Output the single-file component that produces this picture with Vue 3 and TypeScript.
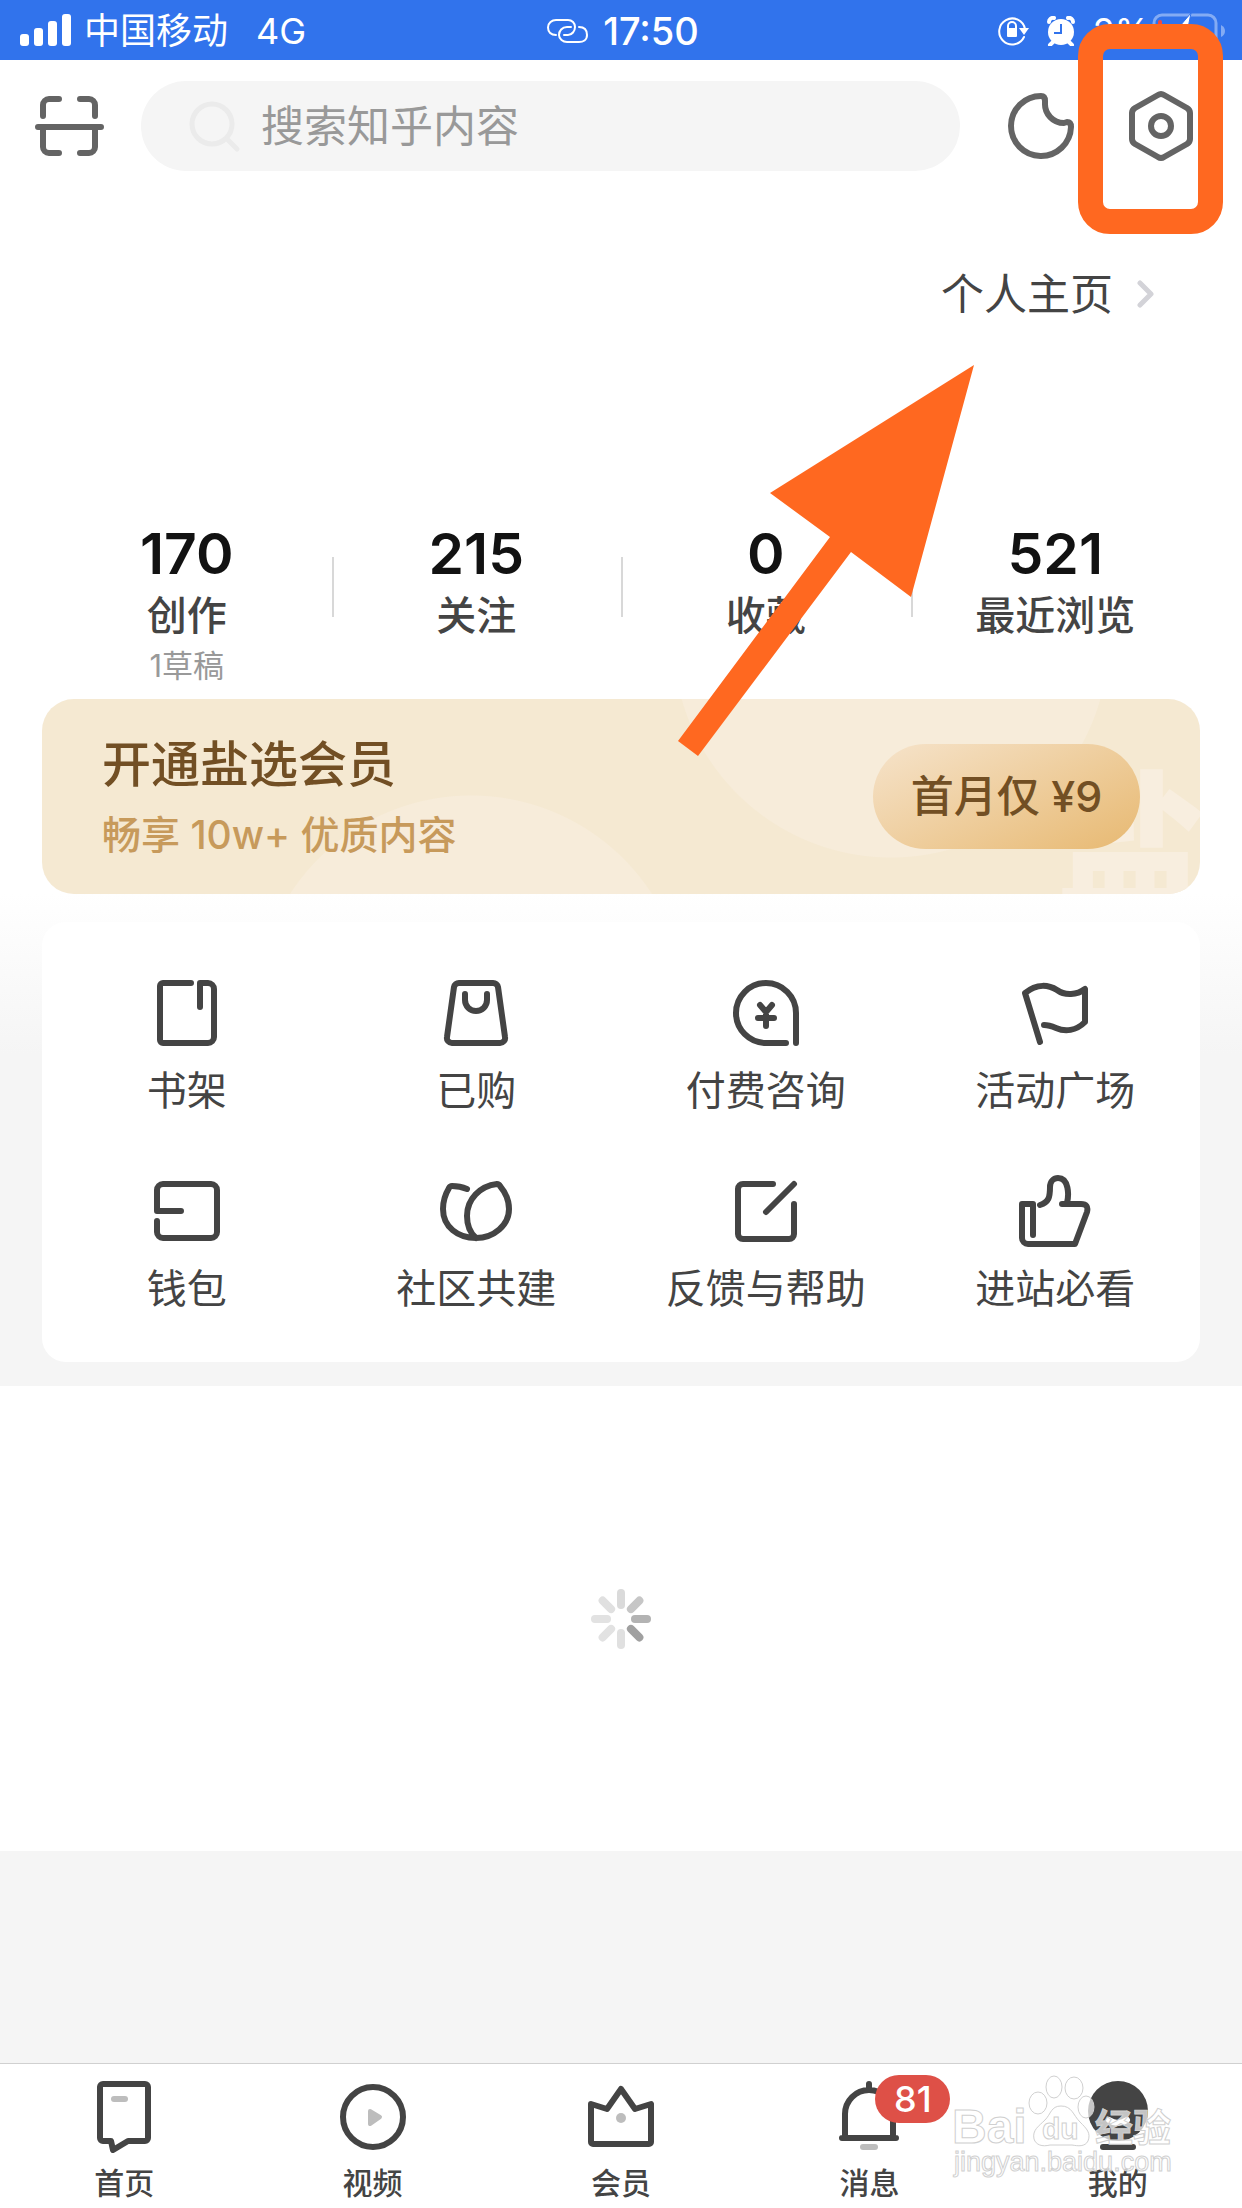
<script setup lang="ts">
import { ref } from 'vue'

interface Stat {
  value: number
  label: string
  note?: string
}

interface Service {
  label: string
  path: string
}

const keyword = ref('')

const stats: Stat[] = [
  { value: 170, label: '创作', note: '1草稿' },
  { value: 215, label: '关注' },
  { value: 0, label: '收藏' },
  { value: 521, label: '最近浏览' },
]

const services: Service[] = [
  { label: '书架', path: 'M49 30V6h8a6 6 0 0 1 6 6v48a6 6 0 0 1-6 6H12a3 3 0 0 1-3-3V9a3 3 0 0 1 3-3h28' },
  { label: '已购', path: 'M19 6h34a5 5 0 0 1 5 4l7 50a5 5 0 0 1-5 6H12a5 5 0 0 1-5-6l7-50a5 5 0 0 1 5-4zM25 17v6a11 11 0 0 0 22 0v-6' },
  { label: '付费咨询', path: 'M66 66V36a30 30 0 1 0-30 30h20M30 28l6 7 6-7M36 35v14M28 41h16' },
  { label: '活动广场', path: 'M21 65L6 16C18 6 30 8 38 13C46 19 58 18 66 12V45C57 54 46 55 37 51Q30 48 25 48' },
  { label: '钱包', path: 'M30 36H6V15a6 6 0 0 1 6-6h48a6 6 0 0 1 6 6v42a6 6 0 0 1-6 6H12a6 6 0 0 1-6-6V46' },
  { label: '社区共建', path: 'M36 63C29 57 27 49 27 41C27 24 40 11 57 9q2 0 3 2C66 18 69 26 69 34C69 50 54 63 36 63C18 63 3 52 3 34C3 25 6 18 9 13q1-2 3-2Q20 11 27 14' },
  { label: '反馈与帮助', path: 'M43 9H13a5 5 0 0 0-5 5v45a5 5 0 0 0 5 5h46a5 5 0 0 0 5-5V29M64 9L36 37' },
  { label: '进站必看', path: 'M14 60V29H3v34a6 6 0 0 0 6 6h47l12-32q2-8-6-8H43M48 28C50 20 50 3 39 3C35 3 31 6 31 12C31 22 30 27 21 30' },
]

const petals: string[] = ['#dadada', '#c6c6c6', '#b3b3b3', '#a0a0a0', '#e0e0e0', '#e2e2e2', '#e2e2e2', '#e0e0e0']
</script>

<template>
  <div class="app">
    <div class="status">
      <div class="status-left">
        <svg class="signal" width="52" height="34" viewBox="0 0 52 34" fill="#fff" aria-hidden="true">
          <rect x="0" y="20" width="9" height="12" rx="3" />
          <rect x="14" y="14" width="9" height="18" rx="3" />
          <rect x="28" y="7" width="9" height="25" rx="3" />
          <rect x="42" y="0" width="9" height="32" rx="3" />
        </svg>
        <span>中国移动</span>
        <span class="network">4G</span>
      </div>
      <div class="status-mid">
        <svg width="42" height="26" viewBox="0 0 42 26" fill="none" stroke="#fff" stroke-width="2" stroke-linecap="round" aria-hidden="true">
          <path d="M9 17C4 17 1 14 1 9.500S5 2 9 2h12c4 0 7 3 7 7s-3 8-7 8h-4" />
          <path d="M32 9c5 0 8 3 8 8s-4 7-8 7H20c-4 0-8-3-8-7s3-8 8-8h4" />
        </svg>
        <span class="time">17:50</span>
      </div>
      <div class="status-right">
        <svg width="32" height="32" viewBox="0 0 32 32" aria-hidden="true">
          <path d="M27 22a13 13 0 1 1 1-8" fill="none" stroke="#fff" stroke-width="2" stroke-linecap="round" />
          <path d="M22 13h10l-5 7z" fill="#fff" />
          <path d="M11 14v-3a4 4 0 0 1 8 0v3" fill="none" stroke="#fff" stroke-width="2" />
          <rect x="10" y="13" width="10" height="9" rx="1" fill="#fff" />
        </svg>
        <svg class="alarm" width="28" height="30" viewBox="0 0 28 30" aria-hidden="true">
          <circle cx="14" cy="16" r="13" fill="#fff" />
          <path d="M2 6a4 4 0 0 1 5-4M26 6a4 4 0 0 0-5-4M6 26l-3 3M22 26l3 3" stroke="#fff" stroke-width="4" stroke-linecap="round" fill="none" />
          <path d="M14 8v9H7" stroke="#3173ec" stroke-width="2" fill="none" />
        </svg>
        <span class="percent">2%</span>
        <svg width="74" height="36" viewBox="0 0 74 36" aria-hidden="true">
          <rect x="2" y="2" width="62" height="32" rx="8" fill="none" stroke="#83abf4" stroke-width="3" />
          <path d="M69 12q4 2 4 6t-4 6z" fill="#83abf4" />
          <rect x="6" y="7" width="4" height="22" rx="2" fill="#f5483f" />
          <path d="M39 0L22 20h10l-5 16 20-21H36z" fill="#fff" stroke="#3173ec" stroke-width="1" />
        </svg>
      </div>
    </div>

    <header class="header">
      <button class="icon-btn" type="button" aria-label="扫一扫">
        <svg class="line grey" viewBox="0 0 72 72">
          <path d="M10 26V15a6 6 0 0 1 6-6h10M47 9h9a6 6 0 0 1 6 6v11M5 37h63M10 37v20a6 6 0 0 0 6 6h10M47 63h9a6 6 0 0 0 6-6V37" />
        </svg>
      </button>
      <label class="search">
        <svg width="54" height="54" viewBox="0 0 54 54" fill="none" stroke="#ebebeb" stroke-width="5" stroke-linecap="round" aria-hidden="true">
          <circle cx="25" cy="25" r="20" />
          <path d="M40 40l10 10" />
        </svg>
        <input v-model="keyword" type="text" placeholder="搜索知乎内容" aria-label="搜索知乎内容" />
      </label>
      <div class="actions">
        <button class="icon-btn" type="button" aria-label="夜间模式">
          <svg class="line grey" viewBox="0 0 72 72">
            <path d="M66 37A30 30 0 1 1 36 6q4 0 4 5v2A19 19 0 0 0 59 33l3-1q4 0 4 5z" />
          </svg>
        </button>
        <button class="icon-btn" type="button" aria-label="设置">
          <svg class="line grey" viewBox="0 0 72 72">
            <path d="M33 5q3-2 6 0l23 13q3 2 3 5v26q0 3-3 5L39 67q-3 2-6 0L10 54q-3-2-3-5V23q0-3 3-5z" />
            <circle cx="36" cy="36" r="10" />
          </svg>
        </button>
      </div>
    </header>

    <div class="profile">
      <a class="home-link" href="#">
        个人主页
        <svg width="18" height="28" viewBox="0 0 18 28" fill="none" stroke="#d3d3d8" stroke-width="5" stroke-linecap="round" stroke-linejoin="round" aria-hidden="true">
          <path d="M3 3l11 11L3 25" />
        </svg>
      </a>
    </div>

    <div class="stats">
      <a v-for="item in stats" :key="item.label" class="stat" href="#">
        <strong>{{ item.value }}</strong>
        <span class="stat-label">{{ item.label }}</span>
        <small v-if="item.note">{{ item.note }}</small>
      </a>
    </div>

    <div class="vip-wrap">
      <section class="vip">
        <span class="salt" aria-hidden="true">盐</span>
        <div class="vip-text">
          <h2>开通盐选会员</h2>
          <p>畅享 10w+ 优质内容</p>
        </div>
        <button class="vip-btn" type="button">首月仅 ¥9</button>
      </section>
    </div>

    <div class="services-wrap">
      <nav class="services">
        <a v-for="item in services" :key="item.label" class="service" href="#">
          <svg class="line" viewBox="0 0 72 72" aria-hidden="true"><path :d="item.path" /></svg>
          <span>{{ item.label }}</span>
        </a>
      </nav>
    </div>

    <main class="feed">
      <svg width="60" height="60" viewBox="-30 -30 60 60" stroke-width="8" stroke-linecap="round" role="img" aria-label="加载中">
        <line v-for="(color, i) in petals" :key="i" x1="0" y1="-14" x2="0" y2="-26" :stroke="color" :transform="`rotate(${i * 45})`" />
      </svg>
    </main>

    <nav class="tabs">
      <a class="tab" href="#">
        <svg class="line" viewBox="0 0 72 72" aria-hidden="true">
          <path d="M15 3h42a3 3 0 0 1 3 3v51a3 3 0 0 1-3 3H40l-15 9-2-9h-8a3 3 0 0 1-3-3V6a3 3 0 0 1 3-3z" />
          <path class="soft" d="M26 18h11" />
        </svg>
        <span>首页</span>
      </a>
      <a class="tab" href="#">
        <svg class="line" viewBox="0 0 72 72" aria-hidden="true">
          <circle cx="36" cy="36" r="30" />
          <path d="M33 30l10 6-10 7z" fill="#bdbdbd" stroke="#bdbdbd" stroke-width="4" />
        </svg>
        <span>视频</span>
      </a>
      <a class="tab" href="#">
        <svg class="line" viewBox="0 0 72 72" aria-hidden="true">
          <path d="M6 23l16 5L36 8l14 20 16-5v38a2 2 0 0 1-2 2H8a2 2 0 0 1-2-2z" />
          <circle cx="36" cy="37" r="5" fill="#bdbdbd" stroke="none" />
        </svg>
        <span>会员</span>
      </a>
      <a class="tab" href="#">
        <span class="tab-icon">
          <svg class="line" viewBox="0 0 72 72" aria-hidden="true">
            <path d="M12 57V33a24 24 0 0 1 48 0v24M9 57h54M36 9V3" />
            <path class="soft" d="M30 66h12" />
          </svg>
          <b class="badge">81</b>
        </span>
        <span>消息</span>
      </a>
      <a class="tab" href="#">
        <svg class="line" viewBox="0 0 72 72" aria-hidden="true">
          <circle cx="36" cy="30" r="30" fill="#444" stroke="none" />
          <path d="M27 39q9 6 18 0" stroke="#fff" />
          <path d="M21 66h30" />
        </svg>
        <span>我的</span>
      </a>

      <svg class="watermark" width="232" height="116" viewBox="0 0 232 116" aria-hidden="true">
        <g fill="#fff" fill-opacity="0.700" stroke="#d0d0d0" stroke-width="1">
          <ellipse cx="88" cy="34" rx="9" ry="11" />
          <ellipse cx="104" cy="18" rx="8" ry="11" />
          <ellipse cx="124" cy="19" rx="9" ry="11" />
          <ellipse cx="136" cy="38" rx="8" ry="11" />
          <path d="M111 37c11 0 12 9 19 16s11 11 8 19c-3 6-10 5-16 4h-22c-8 2-14 0-16-6-2-9 5-13 11-19s6-14 16-14z" />
          <text class="wm-brand" x="2" y="74">Bai</text>
          <text class="wm-du" x="92" y="70">du</text>
          <text class="wm-cn" x="145" y="72">经验</text>
          <text class="wm-url" x="4" y="102">jingyan.baidu.com</text>
        </g>
      </svg>
    </nav>

    <div class="mark-box" aria-hidden="true"></div>
    <svg class="mark-arrow" width="296" height="392" viewBox="0 0 296 392" aria-hidden="true">
      <path d="M296 0L92 128l60 44L0 376l20 15 153-204 60 45z" fill="#ff6820" />
    </svg>
  </div>
</template>

<style>
body {
  margin: 0;
  background: #f5f5f5;
}
</style>

<style scoped>
.app {
  position: relative;
  display: flex;
  flex-direction: column;
  min-height: 100vh;
  overflow: hidden;
  background: #f5f5f5;
  color: #444;
  font-family: Inter, "Noto Sans CJK SC", sans-serif;
}

a {
  color: inherit;
  text-decoration: none;
}

button {
  padding: 0;
  border: 0;
  background: none;
  font-family: inherit;
}

svg {
  display: block;
  flex: none;
}

.line {
  width: 72px;
  height: 72px;
  fill: none;
  stroke: #444;
  stroke-width: 6px;
  stroke-linecap: round;
  stroke-linejoin: round;
}

.grey {
  stroke: #646464;
}

.soft {
  stroke: #bdbdbd;
}

.status {
  display: grid;
  grid-template-columns: 1fr auto 1fr;
  align-items: center;
  box-sizing: border-box;
  height: 60px;
  padding: 2px 16px 0 20px;
  background: #3173ec;
  color: #fff;
  font-size: 36px;
  line-height: 58px;
}

.status-left,
.status-mid,
.status-right {
  display: flex;
  align-items: center;
}

.signal {
  margin-right: 12px;
}

.network {
  margin-left: 28px;
}

.status-mid {
  gap: 14px;
}

.time {
  font-size: 38px;
  font-weight: 500;
}

.status-right {
  justify-content: flex-end;
}

.alarm {
  margin: 0 18px;
}

.percent {
  margin-right: 2px;
}

.header {
  display: flex;
  align-items: center;
  height: 132px;
  padding: 0 45px 0 33px;
  background: #fff;
}

.search {
  display: flex;
  flex: 1;
  align-items: center;
  gap: 20px;
  min-width: 0;
  height: 90px;
  margin: 0 45px 0 36px;
  padding: 0 46px;
  border-radius: 45px;
  background: #f5f5f5;
}

.search input {
  flex: 1;
  width: 100%;
  min-width: 0;
  padding: 0;
  border: 0;
  outline: 0;
  background: none;
  color: #444;
  font-family: inherit;
  font-size: 43px;
  line-height: 60px;
}

.search input::placeholder {
  color: #999;
  opacity: 1;
}

.actions {
  display: flex;
  gap: 48px;
}

.profile {
  display: flex;
  align-items: center;
  justify-content: flex-end;
  height: 204px;
  padding-right: 87px;
  background: #fff;
}

.home-link {
  display: flex;
  align-items: center;
  gap: 24px;
  font-size: 43px;
  line-height: 60px;
}

.stats {
  display: flex;
  padding: 128px 42px 15px;
  background: #fff;
}

.stat {
  position: relative;
  display: flex;
  flex: 1;
  flex-direction: column;
  align-items: center;
  gap: 8px;
}

.stat + .stat::before {
  content: "";
  position: absolute;
  top: 33px;
  left: 0;
  width: 2px;
  height: 60px;
  background: #d8d8d8;
}

.stat strong {
  color: #121212;
  font-size: 57px;
  font-weight: 600;
  line-height: 60px;
}

.stat-label {
  font-size: 40px;
  font-weight: 500;
  line-height: 48px;
}

.stat small {
  color: #999;
  font-size: 31px;
  line-height: 36px;
}

.vip-wrap {
  padding: 0 42px;
  background: #fff;
}

.vip {
  position: relative;
  display: flex;
  align-items: center;
  justify-content: space-between;
  height: 195px;
  padding: 0 60px;
  overflow: hidden;
  border-radius: 32px;
  background:
    radial-gradient(circle 216px at 429px 312px, #f7ecda 215px, transparent 216px),
    radial-gradient(circle 218px at 849px -59px, #f7ecda 217px, transparent 218px),
    #f5e9d2;
}

.salt {
  position: absolute;
  right: -4px;
  bottom: -23px;
  color: #f8eedf;
  font-size: 148px;
  font-weight: 900;
  line-height: 148px;
}

.vip-text {
  position: relative;
  display: flex;
  flex-direction: column;
  gap: 16px;
}

.vip h2 {
  margin: 0;
  color: #724f24;
  font-size: 49px;
  font-weight: 500;
  line-height: 60px;
}

.vip p {
  margin: 0;
  color: #c79a5b;
  font-size: 39px;
  font-weight: 500;
  line-height: 48px;
}

.vip-btn {
  position: relative;
  min-width: 267px;
  height: 105px;
  border-radius: 53px;
  background: linear-gradient(155deg, #f5e1c6 5%, #e8bb76 95%);
  color: #724f24;
  font-size: 43px;
  font-weight: 500;
  line-height: 105px;
}

.services-wrap {
  padding: 28px 42px 24px;
  background: linear-gradient(#fff, #f5f5f5 160px);
}

.services {
  display: grid;
  grid-template-columns: repeat(4, 1fr);
  row-gap: 60px;
  padding: 55px 0 49px;
  border-radius: 24px;
  background: #fff;
}

.service {
  display: flex;
  flex-direction: column;
  align-items: center;
  gap: 18px;
  font-size: 40px;
  line-height: 48px;
}

.feed {
  display: flex;
  align-items: center;
  justify-content: center;
  height: 465px;
  background: #fff;
}

.tabs {
  position: relative;
  display: flex;
  margin-top: auto;
  padding: 17px 0 5px;
  border-top: 1px solid #d0d0d0;
  background: #fff;
}

.tab {
  display: flex;
  flex: 1;
  flex-direction: column;
  align-items: center;
  gap: 10px;
  font-size: 30px;
  font-weight: 500;
  line-height: 40px;
}

.tab-icon {
  position: relative;
}

.badge {
  position: absolute;
  top: -6px;
  left: 42px;
  width: 75px;
  height: 48px;
  border-radius: 24px;
  background: #de5047;
  color: #fff;
  font-size: 36px;
  font-weight: 500;
  line-height: 48px;
  text-align: center;
}

.watermark {
  position: absolute;
  right: 60px;
  bottom: 23px;
}

.wm-brand {
  font: bold 48px "Liberation Sans", sans-serif;
}

.wm-du {
  font: bold 30px "Liberation Sans", sans-serif;
}

.wm-cn {
  font: bold 38px "Noto Sans CJK SC", sans-serif;
}

.wm-url {
  font: 27px "Liberation Sans", sans-serif;
}

.mark-box {
  position: absolute;
  top: 24px;
  right: 19px;
  box-sizing: border-box;
  width: 145px;
  height: 210px;
  border: 25px solid #ff6820;
  border-radius: 32px;
  pointer-events: none;
}

.mark-arrow {
  position: absolute;
  top: 365px;
  right: 268px;
  pointer-events: none;
}
</style>
